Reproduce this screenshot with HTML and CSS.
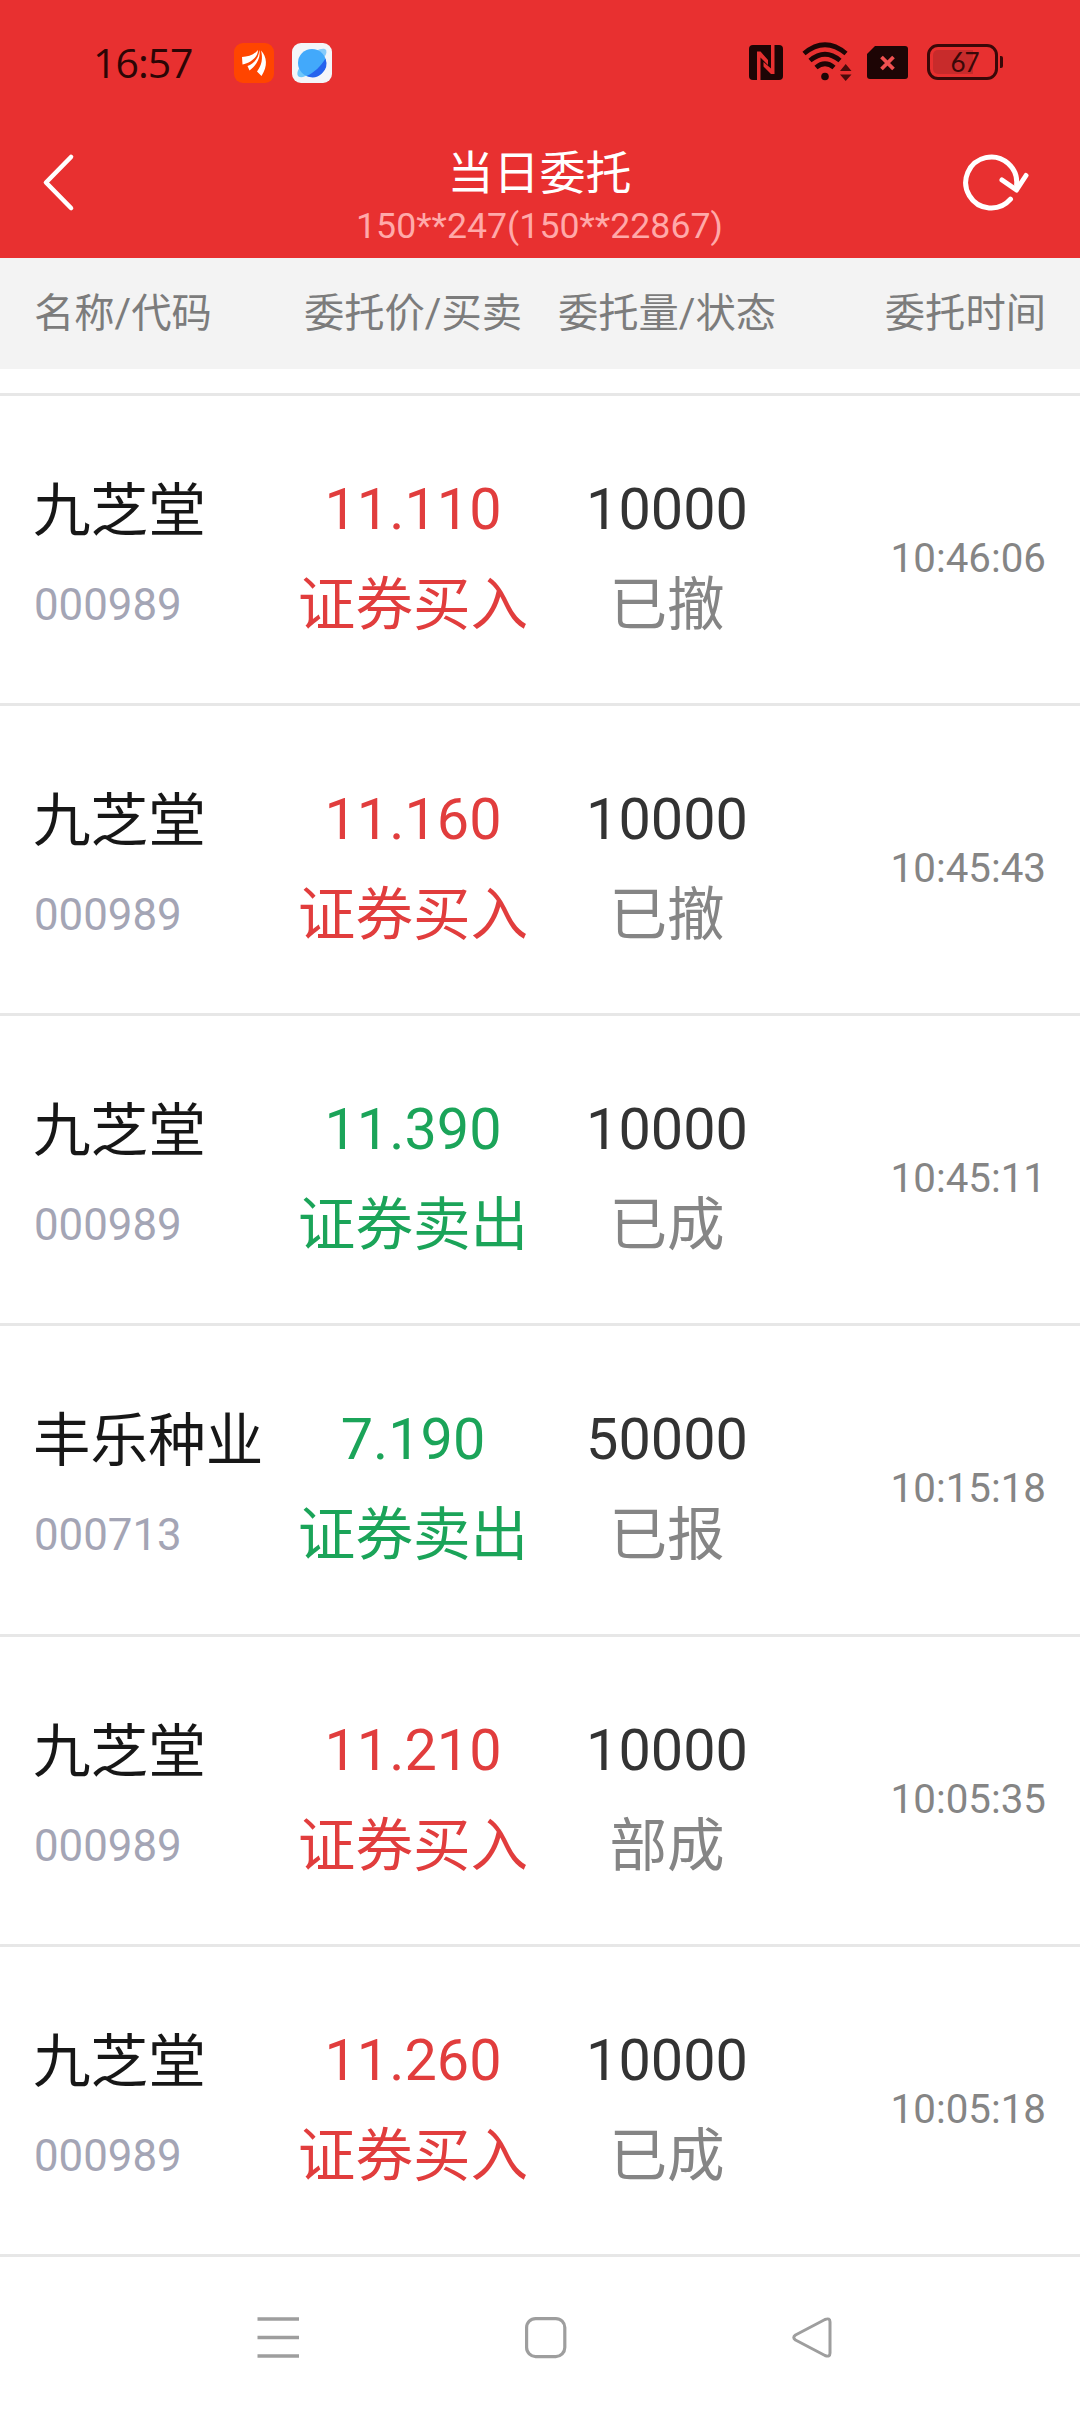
FILE: index.html
```html
<!DOCTYPE html>
<html lang="zh-CN">

<head>
  <meta charset="UTF-8">
  <meta name="viewport" content="width=device-width, initial-scale=1.0">
  <title>当日委托</title>
  <link rel="stylesheet" href="styles.css">
</head>

<body>
  <header class="topArea">
    <div class="statusBar">
      <span class="clock">16:57</span>
      <svg class="appIcon" width="40" height="40" viewBox="0 0 40 40">
        <rect width="40" height="40" rx="9" fill="#ff4500" />
        <path d="M8 14C14 14 20 12 24 7C24 14 17 20 8.500 21.500Z" fill="#fff" />
        <path d="M25.300 7C27 15 22 23 15.500 27.500L13.500 23C20 20.500 25 15 25.300 7Z" fill="#fff" />
        <path d="M27 7.500C33 14 34 23 27.500 33L23 28.500C28 22 29 15 27 7.500Z" fill="#fff" />
      </svg>
      <svg class="appIcon browserIcon" width="40" height="40" viewBox="0 0 40 40">
        <rect width="40" height="40" rx="9" fill="#f3f5f9" />
        <path d="M24 8C29 5 33.500 5 34.300 7.500C35 10 33.500 13 31 16Z" fill="#86cbfb" />
        <path d="M8 24C5 28 4.700 32 6.500 33.500C9 35 13 34 17 31Z" fill="#70c7fa" />
        <circle cx="20" cy="20" r="14" fill="#42a9fb" />
        <path d="M33.500 15.500A14 14 0 0 1 14.500 33C22 30 29 23 33.500 15.500Z" fill="#2462ee" />
      </svg>

      <div class="systemIcons">
        <svg width="34" height="35" viewBox="0 0 34 35">
          <rect width="34" height="35" rx="4" fill="#1d0505" />
          <path d="M8 35V6.500H11.500L19 15V20L11.500 12.500V35Z" fill="#e83030" />
          <path d="M25.500 0V29H22L14.500 21.500V17L22 23.500V0Z" fill="#e83030" />
        </svg>
        <svg class="wifiIcon" width="50" height="40" viewBox="0 0 50 40">
          <g fill="none" stroke="#1d0505" stroke-width="4.800">
            <path d="M2 11.500Q23 -6 44 11.500" />
            <path d="M8 18.500Q23 6 38 18.500" />
            <path d="M14 25.500Q23 18 32 25.500" />
          </g>
          <circle cx="23" cy="34.500" r="3.800" fill="#1d0505" />
          <path d="M43.700 22L49.500 29H38ZM38 32.500H49.500L43.700 39Z" fill="#4b0b0b" />
        </svg>
        <svg class="simIcon" width="41" height="33" viewBox="0 0 41 33">
          <path d="M8 0H38Q41 0 41 3V30Q41 33 38 33H3Q0 33 0 30V8Z" fill="#1d0505" />
          <path d="M14.500 11L26.500 23M26.500 11L14.500 23" stroke="#f05050" stroke-width="3.800" />
        </svg>
        <div class="battery"><span>67</span></div>
      </div>
    </div>

    <div class="titleBar">
      <svg class="backIcon" width="34" height="60" viewBox="0 0 34 60">
        <path d="M30 4L5 29.500L30 55" fill="none" stroke="#fff" stroke-width="4.600" stroke-linecap="round"
          stroke-linejoin="round" />
      </svg>
      <div class="titleText">
        <h1>当日委托</h1>
        <p>150**247(150**22867)</p>
      </div>
      <svg class="refreshIcon" width="68" height="60" viewBox="0 0 68 60">
        <g fill="none" stroke="#fff" stroke-width="5" stroke-linecap="round" stroke-linejoin="round">
          <path d="M49.500 46.200A25.500 25.500 0 1 1 55.600 32" />
          <path d="M41 27L55.500 37L65 22.500" />
        </g>
      </svg>
    </div>
  </header>

  <div class="tableHead">
    <span>名称/代码</span>
    <span class="center">委托价/买卖</span>
    <span class="center">委托量/状态</span>
    <span class="right">委托时间</span>
  </div>

  <main class="orderList">
    <div class="orderRow">
      <div class="cell stock"><b>九芝堂</b><small>000989</small></div>
      <div class="cell center buy"><span>11.110</span><span>证券买入</span></div>
      <div class="cell center amount"><span>10000</span><em>已撤</em></div>
      <div class="time">10:46:06</div>
    </div>
    <div class="orderRow">
      <div class="cell stock"><b>九芝堂</b><small>000989</small></div>
      <div class="cell center buy"><span>11.160</span><span>证券买入</span></div>
      <div class="cell center amount"><span>10000</span><em>已撤</em></div>
      <div class="time">10:45:43</div>
    </div>
    <div class="orderRow">
      <div class="cell stock"><b>九芝堂</b><small>000989</small></div>
      <div class="cell center sell"><span>11.390</span><span>证券卖出</span></div>
      <div class="cell center amount"><span>10000</span><em>已成</em></div>
      <div class="time">10:45:11</div>
    </div>
    <div class="orderRow">
      <div class="cell stock"><b>丰乐种业</b><small>000713</small></div>
      <div class="cell center sell"><span>7.190</span><span>证券卖出</span></div>
      <div class="cell center amount"><span>50000</span><em>已报</em></div>
      <div class="time">10:15:18</div>
    </div>
    <div class="orderRow">
      <div class="cell stock"><b>九芝堂</b><small>000989</small></div>
      <div class="cell center buy"><span>11.210</span><span>证券买入</span></div>
      <div class="cell center amount"><span>10000</span><em>部成</em></div>
      <div class="time">10:05:35</div>
    </div>
    <div class="orderRow">
      <div class="cell stock"><b>九芝堂</b><small>000989</small></div>
      <div class="cell center buy"><span>11.260</span><span>证券买入</span></div>
      <div class="cell center amount"><span>10000</span><em>已成</em></div>
      <div class="time">10:05:18</div>
    </div>
  </main>

  <nav class="navBar">
    <svg width="42" height="42" viewBox="0 0 42 42">
      <path d="M0.500 2H42M0.500 20.500H42M0.500 39H42" stroke="#9e9e9e" stroke-width="3.500" />
    </svg>
    <svg width="42" height="42" viewBox="0 0 42 42">
      <rect x="1.600" y="1.600" width="38.200" height="38" rx="9" fill="none" stroke="#9e9e9e" stroke-width="3.200" />
    </svg>
    <svg width="42" height="42" viewBox="0 0 42 42">
      <path d="M3.500 18L33 2.500Q38 0.500 38 5V36Q38 40.500 33 38.500L3.500 23Q0 20.500 3.500 18Z" fill="none" stroke="#9e9e9e"
        stroke-width="3" stroke-linejoin="round" />
    </svg>
  </nav>
</body>

</html>
```
FILE: styles.css
```css
* {
  box-sizing: border-box;
  margin: 0;
  padding: 0;
}

body {
  width: 1080px;
  height: 2412px;
  overflow: hidden;
  background: #fff;
  font-family: Roboto, "Noto Sans CJK SC", sans-serif;
}

svg {
  display: block;
  flex: none;
}

.topArea {
  height: 258px;
  background: #e83030;
}

/* status bar */
.statusBar {
  height: 126px;
  padding: 0 82px 0 93px;
  display: flex;
  align-items: center;
}

.clock {
  width: 141px;
  margin-top: -3px;
  font-family: "Open Sans", sans-serif;
  font-size: 41px;
  line-height: 50px;
  letter-spacing: -1px;
  color: #2c0505;
}

.browserIcon {
  margin-left: 18px;
}

.systemIcons {
  margin-left: auto;
  margin-top: -2px;
  display: flex;
  align-items: center;
}

.wifiIcon {
  margin-left: 19px;
}

.simIcon {
  margin-left: 15px;
}

.battery {
  position: relative;
  width: 71px;
  height: 36px;
  margin-left: 19px;
  padding: 3px 22px 3px 3px;
  border: 3px solid #3a0808;
  border-radius: 11px;
  background: #c82b2b content-box;
}

.battery::after {
  content: "";
  position: absolute;
  right: -8px;
  top: 9px;
  width: 3px;
  height: 12px;
  border-radius: 0 2px 2px 0;
  background: #3a0808;
}

.battery span {
  position: absolute;
  left: 0;
  right: 0;
  top: 1px;
  padding-left: 4px;
  text-align: center;
  font-family: Lato, sans-serif;
  font-size: 26px;
  line-height: 29px;
  letter-spacing: -1px;
  color: #3a0808;
}

/* title */
.titleBar {
  height: 132px;
  padding: 15px 42px 0 41px;
  display: grid;
  grid-template-columns: 100px 1fr 100px;
}

.backIcon,
.refreshIcon {
  margin-top: 12px;
}

.refreshIcon {
  justify-self: end;
  margin-right: 9px;
}

.titleText {
  padding-top: 2px;
  text-align: center;
}

.titleText h1 {
  font-size: 46px;
  font-weight: 400;
  line-height: 60px;
  color: #fff;
}

.titleText p {
  font-size: 35.700px;
  line-height: 44px;
  margin-top: 1px;
  color: #ffa9a9;
}

/* list */
.tableHead,
.orderRow {
  display: grid;
  grid-template-columns: 252px 254px 254px 1fr;
  padding: 0 34px;
}

.tableHead {
  height: 111px;
  line-height: 112px;
  background: #f3f3f3;
  font-size: 40.300px;
  color: #7c7c7c;
  white-space: nowrap;
}

.center {
  text-align: center;
}

.right {
  text-align: right;
}

.orderList {
  margin-top: 24px;
  border-top: 3px solid #e7e7e7;
}

.orderRow {
  height: 310.170px;
  padding-top: 83px;
  border-bottom: 3px solid #e7e7e7;
}

.cell {
  display: flex;
  flex-direction: column;
  gap: 34px;
  font-size: 57.600px;
  line-height: 62px;
  white-space: nowrap;
}

.stock {
  padding-top: 2px;
  gap: 31px;
}

.stock b {
  margin-left: -1px;
  font-weight: 400;
  color: #171717;
}

.stock small {
  font-size: 43.800px;
  color: #a4a5b5;
}

.buy {
  color: #e13d3d;
}

.sell {
  color: #1ba459;
}

.amount {
  color: #333;
}

.amount em {
  font-style: normal;
  color: #858585;
}

.time {
  padding-top: 1px;
  font-size: 40.300px;
  line-height: 158px;
  text-align: right;
  color: #858585;
}

/* system navigation */
.navBar {
  padding: 60px 246px 0 257px;
  display: flex;
  justify-content: space-between;
}
```
